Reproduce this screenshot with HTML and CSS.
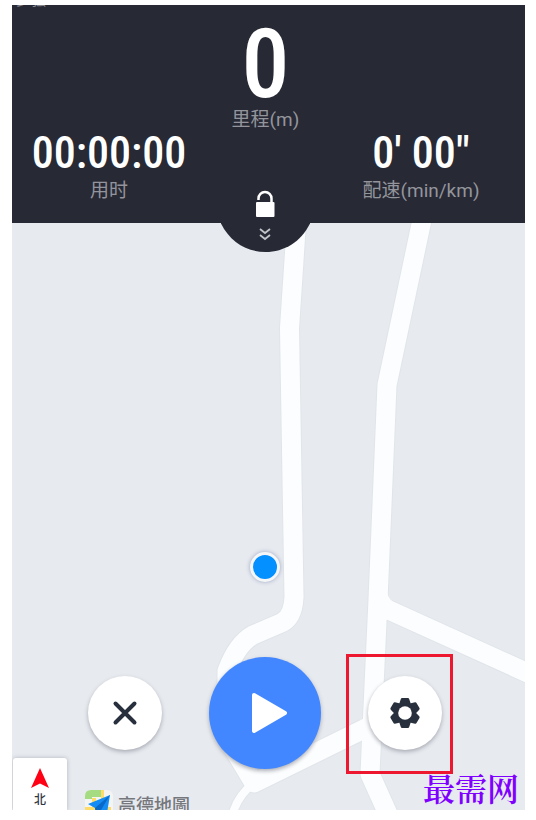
FILE: index.html
```html
<!DOCTYPE html>
<html lang="zh-CN">
<head>
<meta charset="utf-8">
<meta name="viewport" content="width=device-width, initial-scale=1">
<title>跑步</title>
<link rel="stylesheet" href="styles.css">
</head>
<body>
<main class="screen">
  <header class="stats">
    <div class="signal">步强</div>
    <div class="stat stat-main">
      <span class="distance">0</span>
      <span class="label">里程(m)</span>
    </div>
    <div class="stat-row">
      <div class="stat">
        <span class="value">00:00:00</span>
        <span class="label">用时</span>
      </div>
      <div class="stat">
        <span class="value">0′ 00″</span>
        <span class="label">配速(min/km)</span>
      </div>
    </div>
    <button class="lock" type="button" aria-label="解锁">
      <svg width="90" height="62" viewBox="0 0 90 62" aria-hidden="true">
        <path d="M1 30V33.500C10 52 27 62 45.500 62S81 52 90 33.500V30Z" fill="#272935"/>
        <path d="M38.500 10V8.500a6.500 6.500 0 0 1 13 0V14" fill="none" stroke="#fff" stroke-width="2.500"/>
        <rect x="36" y="12" width="18.500" height="15" rx="1" fill="#fff"/>
        <path d="M40 39l5 4 5-4M40 45l5 4 5-4" fill="none" stroke="#c2c3c8" stroke-width="1.800"/>
      </svg>
    </button>
  </header>

  <section class="map" aria-label="地图">
    <svg class="roads" viewBox="12 223 513 587" preserveAspectRatio="xMidYMin slice" aria-hidden="true">
      <g fill="none" stroke-linejoin="round">
        <g stroke="#e1e5ea">
          <path stroke-width="21" d="M297 215L289.500 328L294 597Q293 618 281 623L253 635Q237 644 227 671V738L254 783L364 729"/>
          <path stroke-width="21" d="M423 215L387 385L378 600L371.500 740L370 774L388 814M380 606L530 674"/>
          <path stroke-width="10" d="M254 783Q237 796 232 816"/>
        </g>
        <g stroke="#fcfdfe">
          <path stroke-width="19" d="M297 215L289.500 328L294 597Q293 618 281 623L253 635Q237 644 227 671V738L254 783L368 727"/>
          <path stroke-width="19" d="M423 215L387 385L378 600L371.500 740L370 774L388 814M380 606L530 674"/>
          <path stroke-width="8" d="M254 783Q237 796 232 816"/>
        </g>
        <path d="M387 590Q387 597 392 601L380 606Z" fill="#fcfdfe"/>
      </g>
    </svg>
    <span class="position" role="img" aria-label="当前位置"></span>

    <div class="controls">
      <button class="round" type="button" aria-label="结束">
        <svg width="26" height="26" viewBox="0 0 26 26" aria-hidden="true"><path d="M3.500 3.500l19 19M22.500 3.500l-19 19" stroke="#29303d" stroke-width="4" stroke-linecap="round"/></svg>
      </button>
      <button class="round play" type="button" aria-label="开始">
        <svg width="40" height="44" viewBox="0 0 40 44" aria-hidden="true"><path d="M5 4L36 22L5 40Z" fill="#fff" stroke="#fff" stroke-width="4" stroke-linejoin="round"/></svg>
      </button>
      <div class="highlight">
        <button class="round" type="button" aria-label="设置">
          <svg width="32" height="32" viewBox="-16 -16 32 32" aria-hidden="true">
            <g fill="#29303d">
              <circle r="11"/>
              <path id="tooth" d="M-5.500 -10L-4.200 -14Q-3.800 -15 -3 -15H3Q3.800 -15 4.200 -14L5.500 -10V10L4.200 14Q3.800 15 3 15H-3Q-3.800 15 -4.200 14L-5.500 10Z"/>
              <use href="#tooth" transform="rotate(60)"/>
              <use href="#tooth" transform="rotate(120)"/>
            </g>
            <circle r="6.800" fill="#fff"/>
          </svg>
        </button>
      </div>
    </div>

    <footer class="map-foot">
      <div class="compass">
        <svg width="18" height="20" viewBox="0 0 18 20" aria-hidden="true"><path d="M9 0L18 20L9 15.500L0 20Z" fill="#ff0014"/></svg>
        <span>北</span>
      </div>
      <div class="provider">
        <svg width="28" height="28" viewBox="0 0 28 28" aria-hidden="true">
          <rect width="28" height="28" rx="6" fill="#f4f5f2"/>
          <path d="M0 9V6Q0 0 6 0H16V7H7V9Z" fill="#a5dc81"/>
          <path d="M7 8h4v20H7zM16 0h3v9h-3zM0 17h26v4H0z" fill="#ffdc68"/>
          <path d="M25 5L3 14L10 18L12 27L16 20L22 23Z" fill="#158cf3"/>
          <path d="M25 5L10 18L12 27L16 20Z" fill="#0869c8"/>
        </svg>
        <span>高德地圖</span>
      </div>
      <div class="watermark">最需网</div>
    </footer>
  </section>
</main>
</body>
</html>
```
FILE: styles.css
```css
* { box-sizing: border-box; }

body {
  margin: 0;
  background: #fff;
  font-family: Roboto, "Noto Sans CJK SC", sans-serif;
}

button {
  border: 0;
  padding: 0;
  cursor: pointer;
}

svg { display: block; }

.screen {
  display: flex;
  flex-direction: column;
  min-height: 100vh;
  padding: 5px 11px 10px 12px;
}

.stats {
  position: relative;
  z-index: 1;
  height: 218px;
  background: #272935;
  color: #fff;
}

.signal {
  position: absolute;
  top: 0;
  left: 4px;
  height: 4px;
  overflow: hidden;
  display: flex;
  align-items: flex-end;
  font-size: 15px;
  line-height: 18px;
  color: #85868d;
}

.stat {
  display: flex;
  flex-direction: column;
  align-items: center;
}

.stat-main {
  padding-top: 16px;
  padding-right: 6px;
}

.distance,
.value {
  font-family: "Roboto Condensed", "Liberation Sans Narrow", sans-serif;
  font-weight: 500;
}

.distance {
  font-size: 96px;
  line-height: 87px;
}

.value {
  margin-bottom: 5px;
  font-size: 44px;
  line-height: 42px;
}

.label {
  font-size: 19px;
  line-height: 24px;
  color: #94959c;
}

.stat-row {
  display: grid;
  grid-template-columns: 194px 190px;
  justify-content: space-between;
  padding-right: 9px;
}

.lock {
  position: absolute;
  top: 185px;
  left: calc(50% - 49px);
  background: none;
}

.map {
  position: relative;
  flex: 1;
  display: flex;
  flex-direction: column;
  justify-content: flex-end;
  overflow: hidden;
  background: #e7eaef;
}

.roads {
  position: absolute;
  inset: 0;
  width: 100%;
  height: 100%;
}

.position {
  position: absolute;
  top: 329px;
  left: calc(50% - 19px);
  width: 30px;
  height: 30px;
  border: 3px solid #f5f6f7;
  border-radius: 50%;
  background: #0590ff;
  box-shadow: 0 0 4px #9ca6c2;
}

.controls {
  position: relative;
  display: flex;
  justify-content: center;
  align-items: center;
  gap: 47px;
  padding-right: 7px;
}

.round {
  display: grid;
  place-items: center;
  width: 74px;
  height: 74px;
  border-radius: 50%;
  background: #fff;
  box-shadow: 0 2px 4px #a9acb4;
}

.play {
  width: 112px;
  height: 112px;
  padding-left: 8px;
  background: #4287ff;
}

.highlight {
  display: grid;
  place-items: center;
  width: 107px;
  height: 120px;
  margin: 2px -10px 0 -22px;
  padding: 0 0 2px 12px;
  border: 3px solid #ed1830;
}

.map-foot {
  position: relative;
  display: flex;
  height: 52px;
  margin-top: -16px;
  padding-right: 6px;
}

.compass {
  display: flex;
  flex-direction: column;
  align-items: center;
  gap: 4px;
  width: 54px;
  margin-left: 1px;
  padding-top: 10px;
  border-radius: 3px 3px 0 0;
  background: #fff;
  box-shadow: 0 0 4px #b1b5bd;
  font-size: 12px;
  font-weight: 500;
  line-height: 16px;
  color: #303641;
}

.provider {
  display: flex;
  gap: 5px;
  margin-left: 18px;
  padding-top: 32px;
  font-family: "Noto Sans CJK TC", sans-serif;
  font-size: 18px;
  font-weight: 500;
  line-height: 28px;
  color: #75777c;
}

.watermark {
  margin-left: auto;
  padding-top: 12px;
  font-family: "Liberation Serif", "Noto Serif CJK SC", "Noto Sans CJK SC", serif;
  font-size: 32px;
  font-weight: 600;
  line-height: 40px;
  color: #8000ff;
}
```
